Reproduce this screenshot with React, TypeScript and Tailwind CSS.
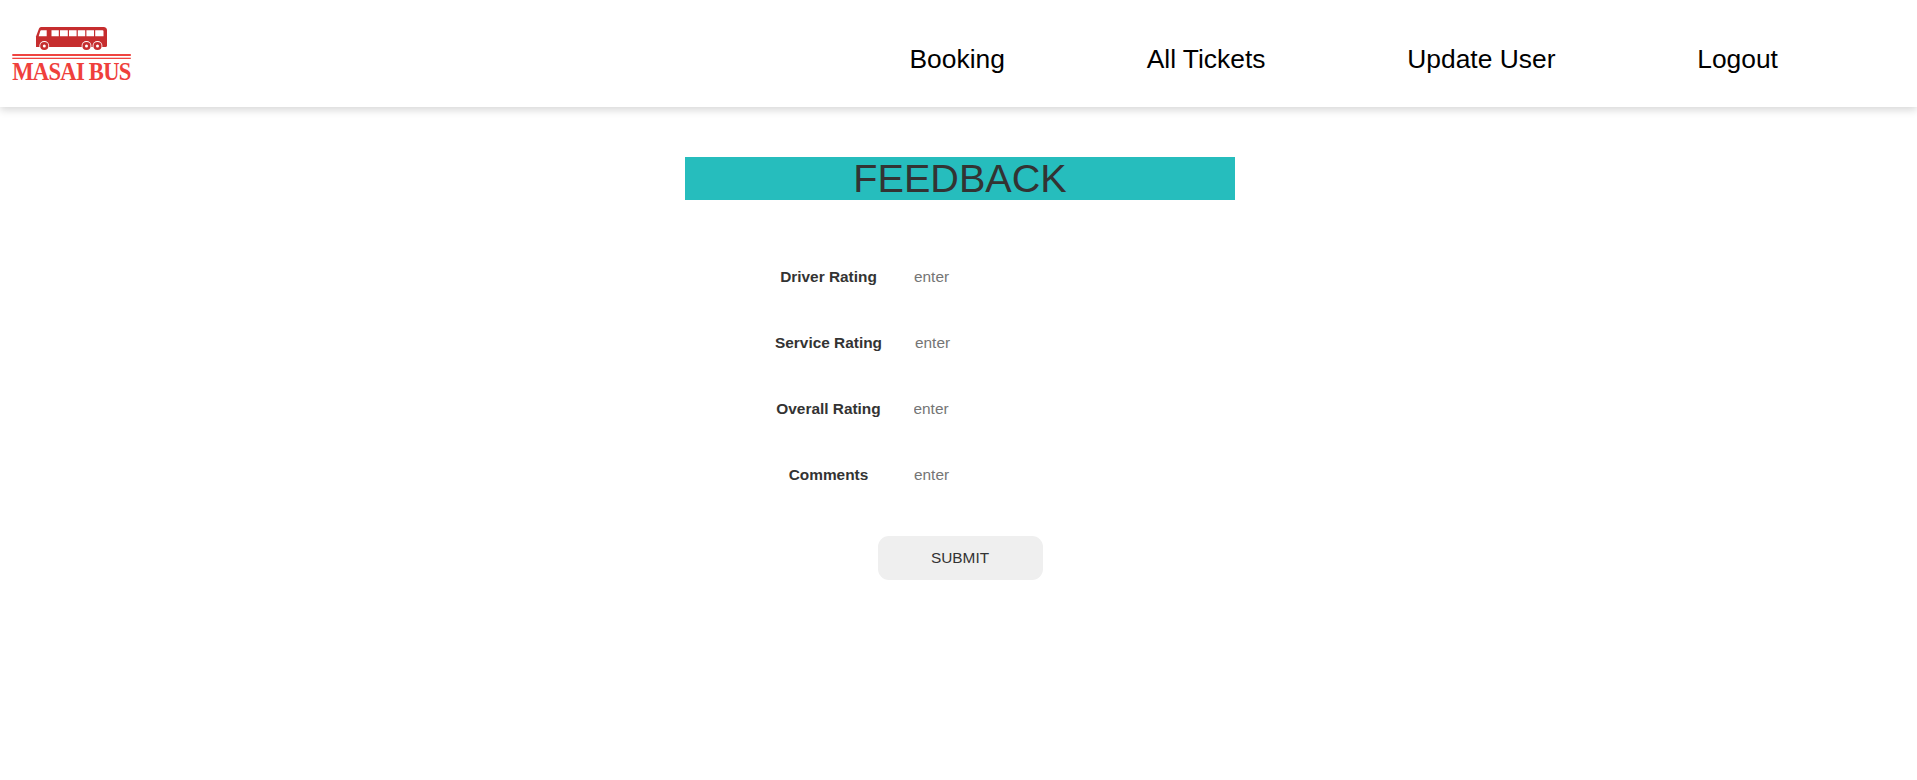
const navItems = ['Booking', 'All Tickets', 'Update User', 'Logout'];

const fields = [
  { label: 'Driver Rating', inset: 'pl-[32px]' },
  { label: 'Service Rating', inset: 'pl-[33px]' },
  { label: 'Overall Rating', inset: 'pl-[31.5px]' },
  { label: 'Comments', inset: 'pl-[32px]' },
];

function Logo() {
  return (
    <svg width="150" height="76" viewBox="0 0 150 76" aria-label="Masai Bus">
      <path
        d="M30 7H92.500Q96 7 96 10.500V25.500Q96 27 94.500 27H25V16.500L28 8.500Q28.600 7 30 7Z"
        fill="#c62d2e"
      />
      <path d="M30.300 10.200H35.700V16.300H27.700L29.300 11Q29.500 10.200 30.300 10.200Z" fill="#fff" />
      <path
        d="M40.500 10.200h7.300v6.100h-7.300zM49 10.200h7.800v6.100h-7.800zM58 10.200h7.600v6.100h-7.600zM66.800 10.200h7.400v6.100h-7.400zM75.400 10.200h7.600v6.100h-7.600zM84.200 10.200h7.300q1 0 1 1v5.100h-8.300z"
        fill="#fff"
      />
      {[33.3, 75.5, 86.5].map((cx) => (
        <g key={cx}>
          <circle cx={cx} cy="26" r="4.900" fill="#fff" />
          <circle cx={cx} cy="26" r="4.100" fill="#c62d2e" />
          <circle cx={cx} cy="26" r="1.500" fill="#fff" />
        </g>
      ))}
      <rect x="1.300" y="34" width="118.500" height="2" fill="#ef4440" />
      <rect x="1.300" y="37.700" width="118.500" height="1.300" fill="#ef4440" />
      <text
        x="1.200"
        y="59.600"
        textLength="118.500"
        lengthAdjust="spacingAndGlyphs"
        className="font-['Liberation_Serif',serif] text-[24.5px] font-bold tracking-[-0.8px]"
        fill="#ef403c"
      >
        MASAI BUS
      </text>
    </svg>
  );
}

export default function App() {
  return (
    <div className="min-h-[780px] bg-white font-['Liberation_Sans',Arial,sans-serif] text-[#333]">
      <header className="flex h-[107px] items-start bg-white shadow-[0_3px_8px_rgba(0,0,0,0.16)]">
        <div className="ml-[11px] mt-[20px] h-[76px] w-[150px] shrink-0">
          <Logo />
        </div>
        <nav className="ml-[748.5px] mt-[43px] flex gap-[141.8px] text-[26.4px] leading-[32px] text-black">
          {navItems.map((item) => (
            <a key={item} href="#" className="whitespace-nowrap">
              {item}
            </a>
          ))}
        </nav>
      </header>
      <main className="ml-[685px] flex w-[550px] flex-col pt-[50px]">
        <h1 className="h-[43px] bg-[#26bdbd] text-center text-[39.6px] leading-[43px]">FEEDBACK</h1>
        <form className="flex flex-col pt-[44px]">
          {fields.map((field) => (
            <div key={field.label} className="flex h-[66px] items-center pl-[90px] text-[15.4px]">
              <label className="w-[107px] whitespace-nowrap text-center font-bold">{field.label}</label>
              <input
                placeholder="enter"
                className={`w-[200px] outline-none placeholder:text-[#757575] ${field.inset}`}
              />
            </div>
          ))}
          <button
            type="button"
            className="ml-[193px] mt-[28px] h-[44px] w-[165px] rounded-[11px] bg-[#efefef] pr-[1px] text-[15.4px]"
          >
            SUBMIT
          </button>
        </form>
      </main>
    </div>
  );
}
